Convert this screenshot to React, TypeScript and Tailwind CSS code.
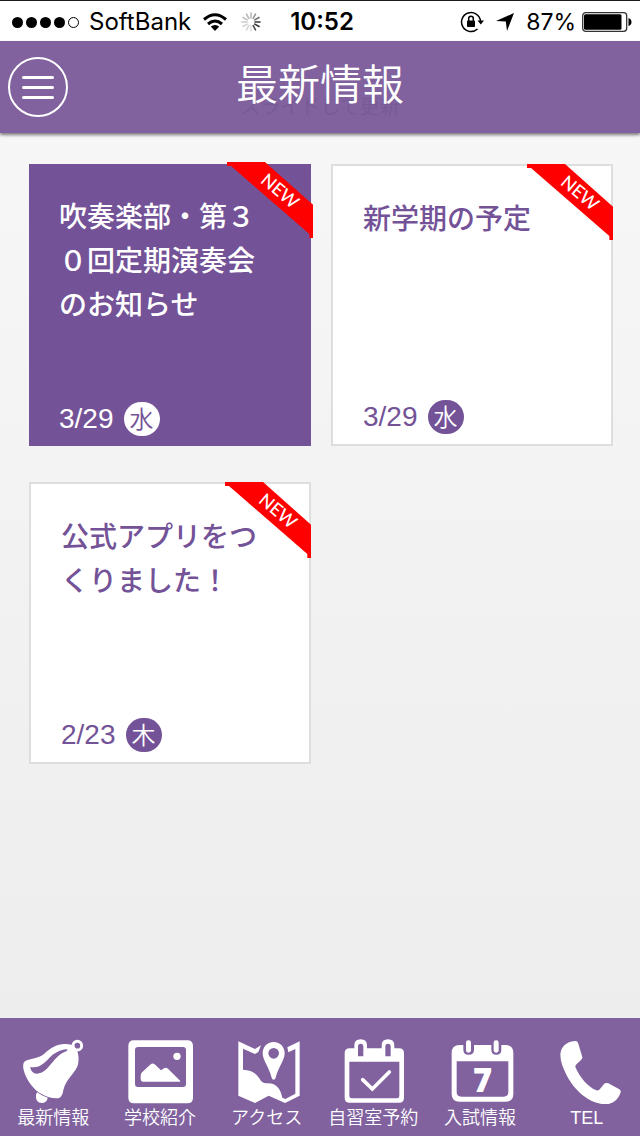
import type { ReactNode } from "react";
import clsx from "clsx";

type NewsItem = {
  title: string;
  date: string;
  weekday: string;
  featured?: boolean;
};

const news: NewsItem[] = [
  { title: "吹奏楽部・第３０回定期演奏会のお知らせ", date: "3/29", weekday: "水", featured: true },
  { title: "新学期の予定", date: "3/29", weekday: "水" },
  { title: "公式アプリをつくりました！", date: "2/23", weekday: "木" },
];

const tabs: { label: string; href: string; viewBox: string; icon: ReactNode }[] = [
  {
    label: "最新情報",
    href: "#news",
    viewBox: "52 84 216 198",
    icon: (
      <>
        <circle cx="233" cy="107" r="13" fill="none" stroke="currentColor" strokeWidth="9" />
        <path d="M223 109 C234 118 240 140 235 163 C230 187 200 205 191 240 C189 254 184 266 170 265 C141 263 111 248 94 224 C78 202 66 174 72 158 C80 144 113 149 134 131 C154 113 173 101 198 102 C210 102 217 104 223 109 Z" />
        <path d="M92 171 C120 176 133 160 148 145 C162 130 179 120 201 118 C204 118 204 121 201 123 C178 132 167 147 154 162 C142 177 130 190 112 191 C100 191 93 183 92 171 Z" fill="#81629f" />
        <path d="M113 247 C121 253 132 259 144 263 C143 273 135 279 126 279 C115 279 108 270 109 259 C109 254 110 250 113 247 Z" />
      </>
    ),
  },
  {
    label: "学校紹介",
    href: "#school",
    viewBox: "372 84 216 198",
    icon: (
      <>
        <path
          fillRule="evenodd"
          d="M402 91 H562 Q579 91 579 108 V263 Q579 280 562 280 H402 Q385 280 385 263 V108 Q385 91 402 91 Z M414 111 Q405 111 405 120 V222 Q405 231 414 231 H549 Q558 231 558 222 V120 Q558 111 549 111 Z"
        />
        <circle cx="531" cy="139" r="11" />
        <path d="M429 215 Q422 215 422 208 V196 Q422 190 427 186 L452 163 Q458 158 464 163 L483 181 L492 175 Q498 171 504 176 L541 213 Q541 215 538 215 Z" />
      </>
    ),
  },
  {
    label: "アクセス",
    href: "#access",
    viewBox: "47 84 216 198",
    icon: (
      <>
        <path
          fillRule="evenodd"
          d="M69 94 L119 117 L137 106 L129 126 L119 132 L83 116 V179 C105 180 119 187 129 201 C138 214 140 220 158 220 C185 220 196 239 201 263 L210 267 L240 251 V117 L219 127 L216 112 L253 94 V257 L209 279 L160 257 L119 279 L69 257 Z"
        />
        <path
          fillRule="evenodd"
          d="M175 96 C195 96 208 111 208 130 C208 150 190 169 181 203 Q179 209 175 209 Q171 209 169 203 C160 169 142 150 142 130 C142 111 155 96 175 96 Z M175 114 A16 16 0 1 0 175 146 A16 16 0 1 0 175 114 Z"
        />
      </>
    ),
  },
  {
    label: "自習室予約",
    href: "#reserve",
    viewBox: "367 84 216 198",
    icon: (
      <>
        <path
          fillRule="evenodd"
          d="M405 115 H419 V106 Q419 88 438 88 Q457 88 457 106 V115 H501 V106 Q501 88 520 88 Q539 88 539 106 V115 H553 Q568 115 568 130 V263 Q568 278 553 278 H405 Q390 278 390 263 V130 Q390 115 405 115 Z M404 155 V258 Q404 265 411 265 H547 Q554 265 554 258 V155 Z M438 101 Q430 101 430 109 V139 H446 V109 Q446 101 438 101 Z M520 101 Q512 101 512 109 V139 H528 V109 Q528 101 520 101 Z"
        />
        <path d="M444 209 L473 237 L524 186" fill="none" stroke="currentColor" strokeWidth="11" strokeLinecap="round" />
      </>
    ),
  },
  {
    label: "入試情報",
    href: "#exam",
    viewBox: "57 84 216 198",
    icon: (
      <>
        <path
          fillRule="evenodd"
          d="M104 105 H115 V119 Q115 134 131 134 Q147 134 147 119 V105 H199 V119 Q199 134 214 134 Q229 134 229 119 V105 H241 Q265 105 265 129 V252 Q265 275 241 275 H104 Q80 275 80 252 V129 Q80 105 104 105 Z M95 154 V246 Q95 260 109 260 H236 Q250 260 250 246 V154 Z"
        />
        <rect x="123" y="91" width="15" height="37" rx="7" />
        <rect x="206" y="91" width="15" height="37" rx="7" />
        <text
          x="173"
          y="245"
          fontSize="98"
          textAnchor="middle"
          className="font-['Open_Sans',sans-serif] font-extrabold"
        >
          7
        </text>
      </>
    ),
  },
  {
    label: "TEL",
    href: "tel:",
    viewBox: "378 84 216 198",
    icon: (
      <path d="M452 93 Q457 93 459 98 L471 138 Q474 145 468 150 L453 164 Q450 168 452 173 C465 202 487 229 514 241 Q519 242 523 239 L537 222 Q543 217 550 220 L583 238 Q588 241 587 247 C580 270 562 284 538 283 C488 279 444 237 422 190 C411 167 402 141 408 122 C414 105 431 93 452 93 Z" />
    ),
  },
];

function StatusBar() {
  return (
    <div className="grid h-[41px] grid-cols-[1fr_auto_1fr] items-center border-t border-[#1c1a20] bg-white pt-0.5 pr-2 pl-3 font-['Inter','Liberation_Sans',sans-serif] text-2xl text-black">
      <div className="flex items-center">
        <div className="mr-2.5 flex gap-[3px]">
          <span className="size-[11px] rounded-full bg-black" />
          <span className="size-[11px] rounded-full bg-black" />
          <span className="size-[11px] rounded-full bg-black" />
          <span className="size-[11px] rounded-full bg-black" />
          <span className="size-[11px] rounded-full border border-black" />
        </div>
        <span>SoftBank</span>
        <svg viewBox="0 0 24 18" className="ml-3 h-[18px] w-6" fill="none" stroke="currentColor" strokeWidth="3">
          <path d="M1 6.5 Q12 -3 23 6.5" />
          <path d="M5 11 Q12 5 19 11" />
          <path d="M12 18 L7.8 13.6 Q12 10.2 16.2 13.6 Z" fill="currentColor" stroke="none" />
        </svg>
        <svg viewBox="0 0 20 20" className="ml-3.5 size-5" stroke="#333" strokeWidth="1.6" strokeLinecap="round">
          <path d="M10 1 V6" opacity=".35" />
          <path d="M14.5 2.2 L12.2 6.4" opacity=".5" />
          <path d="M18 5.5 L13.8 7.9" opacity=".7" />
          <path d="M19 10 H14" />
          <path d="M18 14.5 L13.8 12.1" />
          <path d="M14.5 17.8 L12.2 13.6" opacity=".9" />
          <path d="M10 19 V14" opacity=".15" />
          <path d="M5.5 17.8 L7.8 13.6" opacity=".2" />
          <path d="M2 14.5 L6.2 12.1" opacity=".2" />
          <path d="M1 10 H6" opacity=".25" />
          <path d="M2 5.5 L6.2 7.9" opacity=".3" />
          <path d="M5.5 2.2 L7.8 6.4" opacity=".35" />
        </svg>
      </div>
      <span className="font-semibold">10:52</span>
      <div className="flex items-center justify-end">
        <svg viewBox="0 0 24 22" className="h-[22px] w-6" fill="none" stroke="currentColor" strokeWidth="1.5">
          <path d="M17.5 18 A9.5 9.5 0 1 1 20.5 10" />
          <path d="M17.5 9.5 H24 L20.8 13.5 Z" fill="currentColor" stroke="none" />
          <rect x="7" y="9.5" width="8" height="6.5" rx=".8" fill="currentColor" stroke="none" />
          <path d="M8.7 10 V7.5 A2.3 2.3 0 0 1 13.3 7.5 V10" />
        </svg>
        <svg viewBox="0 0 18 18" className="ml-3 size-[18px]" fill="currentColor">
          <path d="M18 0 L11 18 L9.8 8.6 L0 8 Z" />
        </svg>
        <span className="ml-3 text-[23px]">87%</span>
        <svg viewBox="0 0 50 20" className="ml-1.5 h-5 w-[50px]">
          <rect x=".7" y=".7" width="44" height="18.6" rx="3" fill="none" stroke="#333" strokeWidth="1.3" />
          <rect x="2" y="2.2" width="37.5" height="15.6" rx="1.5" />
          <path d="M46.5 6 Q49.5 7 49.5 10 Q49.5 13 46.5 14 Z" />
        </svg>
      </div>
    </div>
  );
}

function NewRibbon() {
  return (
    <svg viewBox="0 0 258 228" className="absolute -top-0.5 -right-0.5 h-[76px] w-[86px]">
      <path d="M0 0 H114 L258 128 V228 H247 V216 L12 12 H0 Z" fill="#fe0000" />
      <text
        transform="translate(147 101) rotate(40)"
        textAnchor="middle"
        fontSize="54"
        fill="#fff"
        className="font-['Lato',sans-serif] font-medium"
      >
        NEW
      </text>
    </svg>
  );
}

function NewsCard({ title, date, weekday, featured }: NewsItem) {
  return (
    <a
      href="#news"
      className={clsx(
        "relative flex aspect-square flex-col justify-between px-[30px] pt-8 pb-2.5",
        featured ? "bg-[#735297] text-white" : "border-2 border-[#dedede] bg-white text-[#735297]"
      )}
    >
      <h2 className="text-[28px] leading-[44px] font-medium">{title}</h2>
      <div className="flex items-center gap-2.5">
        <span className="text-[28px] leading-[34px]">{date}</span>
        <span
          className={clsx(
            "flex h-[34px] w-9 items-center justify-center rounded-full pt-0.5 text-2xl leading-none font-[350]",
            featured ? "bg-white text-[#735297]" : "bg-[#735297] text-white"
          )}
        >
          {weekday}
        </span>
      </div>
      <NewRibbon />
    </a>
  );
}

export default function App() {
  return (
    <div className="flex min-h-screen flex-col bg-linear-to-b from-[#f8f8f8] to-[#ececec] font-['Liberation_Sans','Noto_Sans_CJK_JP',sans-serif]">
      <StatusBar />
      <header className="relative z-10 grid h-[92px] grid-cols-[1fr_auto_1fr] items-center bg-[#81629f] px-2 text-white shadow-[0_2px_3px_rgba(0,0,0,0.5)]">
        <button
          type="button"
          aria-label="メニュー"
          className="flex size-15 flex-col items-center justify-center gap-[7px] rounded-full border-2 border-white"
        >
          <span className="h-[3px] w-8 rounded-full bg-white" />
          <span className="h-[3px] w-8 rounded-full bg-white" />
          <span className="h-[3px] w-8 rounded-full bg-white" />
        </button>
        {/* pull-to-refresh hint, faintly visible under the title */}
        <p className="absolute inset-x-0 bottom-3.5 text-center text-xl leading-6 text-[#785a95]">スライドして更新</p>
        <h1 className="relative pb-0.5 text-[42px] leading-none font-[350]">最新情報</h1>
      </header>

      <main className="grid flex-1 grid-cols-2 content-start gap-x-5 gap-y-9 pt-[31px] pr-[27px] pb-8 pl-[29px]">
        {news.map((item) => (
          <NewsCard key={item.title} {...item} />
        ))}
      </main>

      <nav className="grid h-[118px] grid-cols-6 bg-[#81629f] pt-5 text-white">
        {tabs.map((tab) => (
          <a key={tab.label} href={tab.href} className="flex flex-col items-center">
            <svg viewBox={tab.viewBox} className="h-[66px] w-[72px]" fill="currentColor" aria-hidden="true">
              {tab.icon}
            </svg>
            <span className="text-lg leading-7 font-[350] whitespace-nowrap">{tab.label}</span>
          </a>
        ))}
      </nav>
    </div>
  );
}
